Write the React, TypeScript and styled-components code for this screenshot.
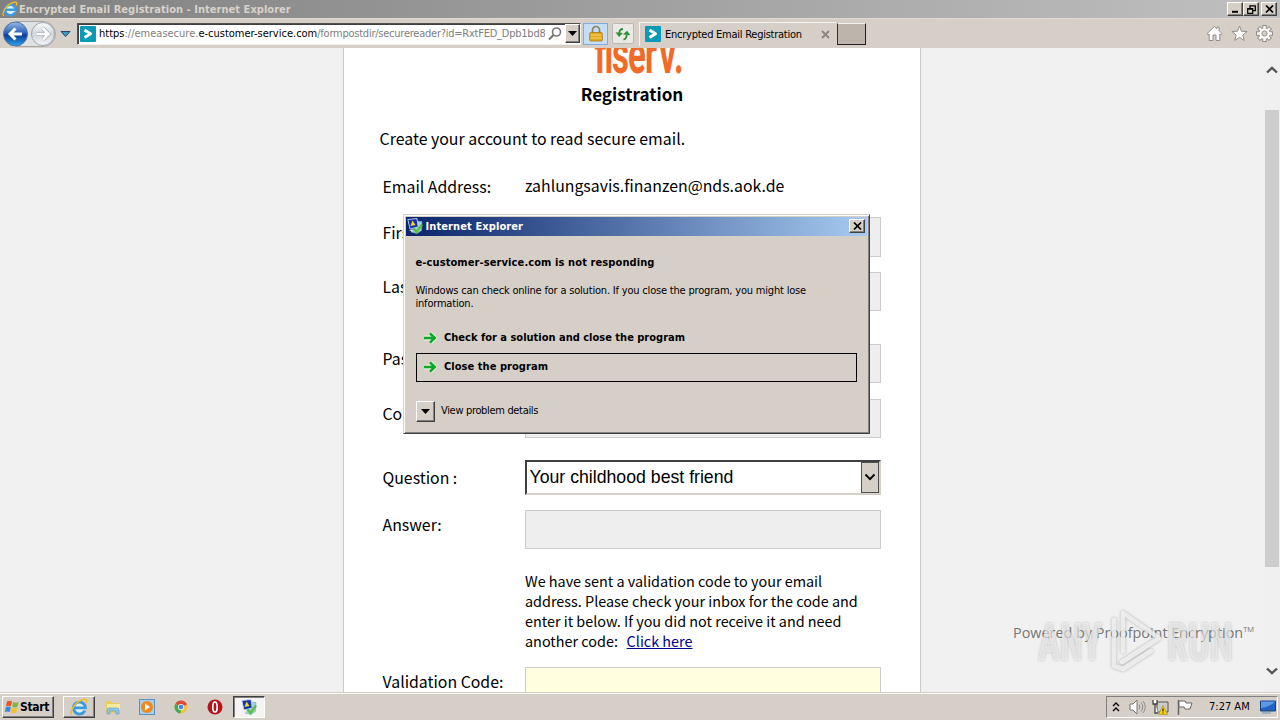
import React from 'react'
import styled, { createGlobalStyle, css } from 'styled-components'

const GlobalStyle = createGlobalStyle`
  * {
    box-sizing: border-box;
  }
  body {
    margin: 0;
    overflow: hidden;
    font-family: 'DejaVu Sans Condensed', 'DejaVu Sans', sans-serif;
    font-stretch: condensed;
    font-size: 11px;
    color: #000;
  }
  svg {
    display: block;
    flex: none;
  }
`

const raised = css`
  border: 1px solid;
  border-color: #fff #404040 #404040 #fff;
  box-shadow: inset -1px -1px 0 #808080;
  background: #d6cfc8;
`

const Desktop = styled.div`
  position: relative;
  display: flex;
  flex-direction: column;
  width: 1280px;
  height: 720px;
  overflow: hidden;
  background: #f1f1f1;
`

const Text = styled.span<{ $track?: number; $size?: number; $bold?: boolean }>`
  white-space: pre;
  font-size: ${(p) => p.$size ?? 11}px;
  font-weight: ${(p) => (p.$bold ? 700 : 400)};
  letter-spacing: ${(p) => p.$track ?? 0}px;
`

const TitleBar = styled.header`
  display: flex;
  align-items: center;
  height: 18px;
  padding: 0 3px 0 2px;
  color: #d8d2ca;
  background: linear-gradient(90deg, #808080, #c0c0c0);
`

const TitleText = styled(Text)`
  flex: 1;
  margin-left: 1px;
`

const CaptionButton = styled.button<{ $gap?: number }>`
  ${raised}
  display: flex;
  align-items: center;
  justify-content: center;
  width: 16px;
  height: 14px;
  margin: 0 0 0 ${(p) => p.$gap ?? 0}px;
  padding: 0;
`

const Toolbar = styled.nav`
  display: flex;
  align-items: center;
  height: 30px;
  padding: 0 7px 0 2px;
  border-top: 1px solid #dedad4;
  background: #d6cfc8;
`

const NavButtons = styled.div`
  display: flex;
  align-items: center;
  width: 75px;
`

const AddressBar = styled.div`
  display: flex;
  align-items: center;
  width: 504px;
  height: 22px;
  padding-left: 2px;
  border: 1px solid;
  border-color: #505050 #f4f2ee #f4f2ee #505050;
  box-shadow: inset 1px 1px 0 #404040;
  background: #fff;
`

const Url = styled.div`
  width: 446px;
  margin-left: 3px;
  overflow: hidden;
  white-space: nowrap;
  color: #808080;
  b {
    color: #000;
    font-weight: 400;
  }
`

const DropButton = styled.button<{ $w: number; $h: number }>`
  ${raised}
  display: flex;
  align-items: center;
  justify-content: center;
  width: ${(p) => p.$w}px;
  height: ${(p) => p.$h}px;
  padding: 0;
`

const LockButton = styled.div`
  display: flex;
  align-items: center;
  justify-content: center;
  width: 25px;
  height: 22px;
  margin-left: 2px;
  border: 1px solid #7fabe0;
  background: #c6ddf8;
`

const RefreshButton = styled.div`
  display: flex;
  align-items: center;
  justify-content: center;
  width: 22px;
  height: 21px;
  margin-left: 4px;
  border: 1px solid #bcb8b2;
  border-radius: 2px;
  background: #ebe9e6;
`

const Tab = styled.div`
  display: flex;
  align-items: center;
  width: 197px;
  height: 24px;
  margin-left: 5px;
  padding-left: 5px;
  border-top: 1px solid #f6f4f1;
  border-left: 1px solid #f6f4f1;
`

const TabLabel = styled(Text)`
  flex: 1;
  margin-left: 4px;
`

const NewTab = styled.div`
  width: 29px;
  height: 22px;
  margin-left: 1px;
  border: 1px solid #fff;
  border-color: #f4f2ee #202020 #202020 #303030;
  background: #bdb5ab;
`

const ToolIcons = styled.div`
  display: flex;
  gap: 8px;
  margin-left: auto;
`

const Page = styled.main`
  position: relative;
  display: flex;
  height: 644px;
  padding-left: 343px;
  overflow: hidden;
  background: #f1f1f1;
  font-family: 'Noto Sans CJK SC', 'Open Sans', sans-serif;
  font-stretch: normal;
`

const Card = styled.section`
  width: 578px;
  height: 660px;
  border: solid #ccc;
  border-width: 0 1px;
  background: #fff;
`

const Heading = styled.h1`
  margin: 7px 0 0;
  text-align: center;
  font-size: 17.1px;
  font-weight: 700;
  line-height: 24px;
`

const Intro = styled.p`
  margin: 21px 0 0 35.5px;
  font-size: 15.9px;
  line-height: 24px;
`

const FormRow = styled.div<{ $top: number; $pad?: number }>`
  display: grid;
  grid-template-columns: 142.5px 356px;
  align-items: start;
  margin: ${(p) => p.$top}px 0 0 38.5px;
  font-size: 15.85px;
  label {
    padding-top: ${(p) => p.$pad ?? 4}px;
    line-height: 24px;
    white-space: nowrap;
  }
`

const Value = styled.span`
  line-height: 24px;
`

const Input = styled.div<{ $h?: number; $yellow?: boolean }>`
  height: ${(p) => p.$h ?? 39}px;
  border: 1px solid #ccc;
  background: ${(p) => (p.$yellow ? '#ffffe0' : '#eee')};
`

const Select = styled.div`
  display: flex;
  align-items: center;
  justify-content: space-between;
  height: 35px;
  padding-left: 2.5px;
  border: 2px solid;
  border-color: #404040 #d4d0c8 #d4d0c8 #404040;
  background: #fff;
  font-family: 'Liberation Sans', Arial, sans-serif;
  font-size: 17.7px;
`

const SelectArrow = styled.span`
  display: flex;
  align-items: center;
  justify-content: center;
  width: 18px;
  height: 31px;
  border: 1px solid #505050;
  background: #d4d0c8;
`

const Note = styled.p`
  margin: 0;
  font-size: 14.4px;
  line-height: 20px;
  white-space: nowrap;
  a {
    margin-left: 5.5px;
    color: #00008b;
    text-decoration: underline;
  }
`

const Powered = styled.div`
  position: absolute;
  left: 1013px;
  top: 574px;
  color: #777;
  font-family: 'Open Sans', sans-serif;
  font-size: 14.4px;
  line-height: 22px;
  white-space: nowrap;
  sup {
    font-size: 7.5px;
    line-height: 0;
    vertical-align: 6px;
  }
`

const Watermark = styled.svg`
  position: absolute;
  left: 1030px;
  top: 600px;
  filter: drop-shadow(0 0 1.5px rgba(100, 100, 100, 0.6));
`

const ScrollBar = styled.aside`
  display: flex;
  flex-direction: column;
  align-items: center;
  width: 16px;
  margin-left: auto;
  padding: 18px 1px 17px;
  background: #f0f0f0;
`

const Thumb = styled.div`
  width: 14px;
  height: 457px;
  margin: 36px 0 auto;
  background: #cdcdcd;
`

const Dialog = styled.section`
  position: absolute;
  left: 403px;
  top: 214px;
  width: 467px;
  height: 220px;
  padding: 1px;
  border: 1px solid;
  border-color: #d6cfc8 #404040 #404040 #d6cfc8;
  box-shadow: inset 1px 1px 0 #fff, inset -1px -1px 0 #808080;
  background: #d6cfc8;
`

const DialogTitle = styled.div`
  display: flex;
  align-items: center;
  height: 19px;
  margin: 1px;
  padding: 0 2px 1px 1px;
  color: #fff;
  background: linear-gradient(90deg, #0a246a, #a6caf0);
  ${Text} {
    flex: 1;
    margin-left: 2.5px;
  }
`

const DialogBody = styled.div`
  display: flex;
  flex-direction: column;
  padding: 19px 10px 0 11px;
  line-height: 13px;
  > ${Text} {
    margin-left: -0.5px;
  }
`

const Message = styled.div`
  display: flex;
  flex-direction: column;
  margin: 15px 0 14px -0.5px;
`

const Choice = styled.div<{ $focused?: boolean }>`
  display: flex;
  align-items: center;
  width: 441px;
  height: 29px;
  padding: 0 0 1px 5px;
  border: 1px solid ${(p) => (p.$focused ? '#000' : 'transparent')};
  ${Text} {
    margin: -2px 0 0 6px;
  }
`

const Details = styled.div`
  display: flex;
  align-items: center;
  margin-top: 19px;
  ${Text} {
    margin: -2px 0 0 6px;
  }
`

const Taskbar = styled.footer`
  display: flex;
  align-items: center;
  height: 28px;
  padding: 2px;
  border-top: 1px solid #d6cfc8;
  box-shadow: inset 0 1px 0 #fff;
  background: #d6cfc8;
`

const StartButton = styled.button`
  ${raised}
  display: flex;
  align-items: center;
  width: 52px;
  height: 22px;
  padding: 0 0 0 1px;
  font-family: inherit;
  font-stretch: condensed;
`

const TaskButton = styled.div<{ $active?: boolean }>`
  ${raised}
  display: flex;
  align-items: center;
  justify-content: center;
  width: 32px;
  height: 22px;
  ${(p) =>
    p.$active &&
    css`
      border-color: #404040 #fff #fff #404040;
      box-shadow: inset 1px 1px 0 #808080;
      background: #f6f4f2;
    `}
`

const Pinned = styled.div`
  display: flex;
  gap: 18px;
  margin: 0 10px;
`

const Tray = styled.div`
  display: flex;
  align-items: center;
  width: 172px;
  height: 22px;
  margin-left: auto;
  padding-left: 5px;
  border: 1px solid;
  border-color: #808080 #fff #fff #808080;
`

const IeIcon = ({ size = 16 }: { size?: number }) => (
  <svg width={size} height={size} viewBox="0 0 16 16" fill="none">
    <circle cx="8.3" cy="8.6" r="5.4" fill="#d9f0fb" />
    <path d="M13.2 11.2a5.3 5.3 0 1 1 .5-2.5H4" stroke="#3b9bdc" strokeWidth="2.5" />
    <path d="M1.6 14.8C-.6 12 4.5 3 12 1.3c3-.6 3.3 1.1 2.1 3.3" stroke="#eebd27" strokeWidth="1.4" />
  </svg>
)

const SiteIcon = () => (
  <svg width="16" height="16" viewBox="0 0 16 16">
    <rect width="16" height="16" rx="1" fill="#0a9ab8" />
    <path d="M4.5 4 10.5 7.8 4.5 11.5" fill="none" stroke="#fff" strokeWidth="3" strokeLinejoin="round" />
  </svg>
)

const DownArrow = () => (
  <svg width="9" height="5" viewBox="0 0 9 5">
    <path d="M0 0h9L4.5 5z" fill="#000" />
  </svg>
)

const CloseGlyph = () => (
  <svg width="9" height="8" viewBox="0 0 9 8">
    <path d="m1 .5 7 7m0-7-7 7" stroke="#000" strokeWidth="1.7" />
  </svg>
)

const CrashIcon = () => (
  <svg width="16" height="16" viewBox="0 0 16 16">
    <path d="m8 3 7 .5-.5 9-4.5 3-6-1.5 2-3z" fill="#9ad3dc" stroke="#7aa3b5" strokeWidth=".6" />
    <path d="m.8 1.5 9.2-1 1.2 8.5-8.2 2z" fill="#1733a8" stroke="#c4d3ee" strokeWidth=".9" />
    <path d="m5.5 2.5 3 4.6-5 1z" fill="#f2d92c" />
    <path d="m6.5 10.5 3 3.5L15 6.5" fill="none" stroke="#5cbf3a" strokeWidth="2.3" />
    <path d="m2 12 3.5-.5V14z" fill="#e3ecf4" />
  </svg>
)

const GreenArrow = () => (
  <svg width="16" height="16" viewBox="0 0 16 16">
    <path d="M2 8h11M8 3.5 12.5 8 8 12.5" fill="none" stroke="#d9f3d6" strokeWidth="5" strokeLinejoin="round" />
    <path d="M2 8h10.500M8 3.300 12.700 8 8 12.700" fill="none" stroke="#12a52b" strokeWidth="2.600" />
  </svg>
)

const BackForward = () => (
  <svg width="55" height="28" viewBox="0 0 55 28">
    <defs>
      <linearGradient id="back" x2="0" y2="1">
        <stop offset="0" stopColor="#9bb8e6" />
        <stop offset=".45" stopColor="#2c63bd" />
        <stop offset=".55" stopColor="#0c3c99" />
        <stop offset="1" stopColor="#2ba5ee" />
      </linearGradient>
      <linearGradient id="fwd" x2="0" y2="1">
        <stop offset="0" stopColor="#fbfcfd" />
        <stop offset=".5" stopColor="#d0d5db" />
        <stop offset="1" stopColor="#f4f7fa" />
      </linearGradient>
    </defs>
    <path d="M14 1.5h27a12.5 12.5 0 0 1 0 25H14z" fill="#dfe0e0" stroke="#a7a9ad" />
    <circle cx="13.5" cy="14" r="12" fill="url(#back)" stroke="#55739e" />
    <path d="M20 14H8m5.5-5.5L8 14l5.5 5.5" fill="none" stroke="#fff" strokeWidth="3" />
    <circle cx="41" cy="14" r="11.5" fill="url(#fwd)" stroke="#9da5ae" />
    <path d="M34.5 14h12M41 8.5l5.5 5.5-5.5 5.5" fill="none" stroke="#a8adb4" strokeWidth="4" />
    <path d="M34.5 14h12M41 8.5l5.5 5.5-5.5 5.5" fill="none" stroke="#fff" strokeWidth="2.6" />
  </svg>
)

const Chevron = ({ up }: { up?: boolean }) => (
  <svg width="12" height="8" viewBox="0 0 12 8">
    <path d={up ? 'M1 6.5 6 1.8l5 4.7' : 'M1 1.5l5 4.7 5-4.7'} fill="none" stroke="#555" strokeWidth="2.4" />
  </svg>
)

const App: React.FC = () => {
  return (
    <Desktop>
      <GlobalStyle />
      <TitleBar>
        <IeIcon />
        <TitleText $bold $track={0.04}>Encrypted Email Registration - Internet Explorer</TitleText>
        <CaptionButton>
          <svg width="8" height="8" viewBox="0 0 8 8"><path d="M1 6.8h6" stroke="#000" strokeWidth="2" /></svg>
        </CaptionButton>
        <CaptionButton>
          <svg width="9" height="9" viewBox="0 0 9 9" fill="none" stroke="#000">
            <path d="M3 3V.8h5.3v4.8H6" strokeWidth="1.3" />
            <path d="M.7 3.7h5v4.6h-5zM.7 4.2h5" strokeWidth="1.2" />
          </svg>
        </CaptionButton>
        <CaptionButton $gap={2}><CloseGlyph /></CaptionButton>
      </TitleBar>

      <Toolbar>
        <NavButtons>
          <BackForward />
          <svg width="11" height="8" viewBox="0 0 11 8" style={{ marginLeft: 3 }}>
            <path d="M1 1.5h9L5.5 6.5z" fill="#3a9bc5" stroke="#22466d" />
          </svg>
        </NavButtons>
        <AddressBar>
          <SiteIcon />
          <Url>
            <Text><b>https</b>://emeasecure.<b>e-customer-service.com</b></Text>
            <Text $track={-0.24}>/formpostdir/securereader?id=RxtFED_Dpb1bd8</Text>
          </Url>
          <svg width="20" height="18" viewBox="0 0 20 18">
            <circle cx="11.5" cy="7" r="4" fill="none" stroke="#777" strokeWidth="1.6" />
            <path d="m8.5 10-4.5 4.5" stroke="#777" strokeWidth="2.2" />
          </svg>
          <DropButton $w={15} $h={19}><DownArrow /></DropButton>
        </AddressBar>
        <LockButton>
          <svg width="14" height="17" viewBox="0 0 14 17">
            <path d="M3.5 8V5a3.5 3.5 0 0 1 7 0v3" fill="none" stroke="#8d8156" strokeWidth="1.7" />
            <rect x=".7" y="7.5" width="12.6" height="8.5" rx="1" fill="#e3aa1f" stroke="#a87913" strokeWidth=".8" />
            <path d="M1.5 10h11M1.5 13h11" stroke="#f5d36b" />
          </svg>
        </LockButton>
        <RefreshButton>
          <svg width="16" height="14" viewBox="0 0 16 14">
            <path d="M8 2Q4.5 2 4.3 6" fill="none" stroke="#2f9137" strokeWidth="1.8" />
            <path d="M.5 5.2 8 6l-4 4z" fill="#2f9137" />
            <path d="M8.5 12.5q3.2-.5 3.2-5" fill="none" stroke="#2f9137" strokeWidth="1.8" />
            <path d="m8 7.500 7.500.800L12 3.800z" fill="#2f9137" />
          </svg>
        </RefreshButton>
        <Tab>
          <SiteIcon />
          <TabLabel $track={-0.25}>Encrypted Email Registration</TabLabel>
          <svg width="9" height="9" viewBox="0 0 9 9" style={{ marginRight: 6 }}>
            <path d="m1 1 7 7m0-7L1 8" stroke="#8b8680" strokeWidth="1.9" />
          </svg>
        </Tab>
        <NewTab />
        <ToolIcons>
          <svg width="17" height="17" viewBox="0 0 17 17">
            <path d="m8.5 1.5 2.4 2.2V2.2h2.2v3.5L16 8.6l-1.2 1.1-1-.8v6.6H10V10H7v5.5H3.2V8.9l-1 .8L1 8.6z" fill="#fff" stroke="#918d88" />
          </svg>
          <svg width="17" height="17" viewBox="0 0 17 17">
            <path d="m8.5 1 2 5.2 5.6.3-4.3 3.5 1.4 5.4-4.7-3-4.7 3L5.2 10 .9 6.5l5.6-.3z" fill="#fff" stroke="#918d88" />
          </svg>
          <svg width="17" height="17" viewBox="0 0 17 17">
            <g stroke="#918d88" strokeWidth="4.4">
              <path d="M8.5 0v17M0 8.5h17M2.5 2.5l12 12M14.5 2.5l-12 12" />
            </g>
            <circle cx="8.5" cy="8.5" r="6" fill="#918d88" />
            <path d="M8.5 1v15M1 8.5h15M3.2 3.2l10.6 10.6M13.8 3.2 3.2 13.8" stroke="#fff" strokeWidth="2.4" />
            <circle cx="8.5" cy="8.5" r="5.2" fill="#fff" />
            <circle cx="8.5" cy="8.5" r="2.6" fill="#d6cfc8" stroke="#918d88" />
          </svg>
        </ToolIcons>
      </Toolbar>

      <Page>
        <Card>
          <svg width="576" height="27" viewBox="0 0 576 27">
            <text
              transform="scale(.6 1)"
              x="417.5 434 446.5 473.5 501.5 525.5 550"
              y="25"
              fill="#f26a28"
              fontFamily="Roboto, sans-serif"
              fontWeight="700"
              fontSize="55"
            >
              fiserv.
            </text>
          </svg>
          <Heading>Registration</Heading>
          <Intro>Create your account to read secure email.</Intro>
          <FormRow $top={23} $pad={1}>
            <label>Email Address:</label>
            <Value>zahlungsavis.finanzen@nds.aok.de</Value>
          </FormRow>
          <FormRow $top={18}>
            <label>First Name:</label>
            <Input $h={40} />
          </FormRow>
          <FormRow $top={15} $pad={3}>
            <label>Last Name:</label>
            <Input />
          </FormRow>
          <FormRow $top={33} $pad={3}>
            <label>Password:</label>
            <Input />
          </FormRow>
          <FormRow $top={16} $pad={3}>
            <label>Confirm:</label>
            <Input />
          </FormRow>
          <FormRow $top={22} $pad={6}>
            <label>Question :</label>
            <Select>
              Your childhood best friend
              <SelectArrow>
                <svg width="12" height="9" viewBox="0 0 12 9">
                  <path d="m1.5 1.5 4.5 4.7 4.5-4.7" fill="none" stroke="#000" strokeWidth="1.9" />
                </svg>
              </SelectArrow>
            </Select>
          </FormRow>
          <FormRow $top={15} $pad={3}>
            <label>Answer:</label>
            <Input />
          </FormRow>
          <FormRow $top={22}>
            <span />
            <Note>
              We have sent a validation code to your email
              <br />
              address. Please check your inbox for the code and
              <br />
              enter it below. If you did not receive it and need
              <br />
              another code: <a>Click here</a>
            </Note>
          </FormRow>
          <FormRow $top={16} $pad={3}>
            <label>Validation Code:</label>
            <Input $yellow />
          </FormRow>
        </Card>
        <Powered>
          Powered by Proofpoint Encryption<sup>TM</sup>
        </Powered>
        <ScrollBar>
          <Chevron up />
          <Thumb />
          <Chevron />
        </ScrollBar>
      </Page>

      <Dialog>
        <DialogTitle>
          <CrashIcon />
          <Text $bold $track={0.1}>Internet Explorer</Text>
          <CaptionButton><CloseGlyph /></CaptionButton>
        </DialogTitle>
        <DialogBody>
          <Text $bold $track={0.1}>e-customer-service.com is not responding</Text>
          <Message>
            <Text $track={-0.19}>Windows can check online for a solution. If you close the program, you might lose</Text>
            <Text $track={-0.2}>information.</Text>
          </Message>
          <Choice>
            <GreenArrow />
            <Text $bold>Check for a solution and close the program</Text>
          </Choice>
          <Choice $focused>
            <GreenArrow />
            <Text $bold $track={0.05}>Close the program</Text>
          </Choice>
          <Details>
            <DropButton $w={19} $h={21}><DownArrow /></DropButton>
            <Text $track={-0.33}>View problem details</Text>
          </Details>
        </DialogBody>
      </Dialog>

      <Watermark width="210" height="80" viewBox="0 0 210 80">
        <g fill="#f6f6f6" fillOpacity=".6" fontFamily="Roboto, sans-serif" fontWeight="700" fontSize="52">
          <text x="8" y="60" textLength="64" lengthAdjust="spacingAndGlyphs">ANY</text>
          <text x="137" y="60" textLength="66" lengthAdjust="spacingAndGlyphs">RUN</text>
        </g>
        <path
          d="M93 51V13l36 25-37 24M93 69l-9-3V20M93 69l28-18"
          fill="none"
          stroke="#f8f8f8"
          strokeOpacity=".8"
          strokeWidth="4.5"
          strokeLinejoin="round"
          strokeLinecap="round"
        />
      </Watermark>

      <Taskbar>
        <StartButton>
          <svg width="16" height="16" viewBox="0 0 16 16">
            <path d="M3 2.5q2.5-1.5 5 0L7 7.3q-2.5-1.3-5 0z" fill="#e4572e" />
            <path d="M9 3q2.5 1.4 5.5 0l-1 4.8q-2.8 1.4-5.3 0z" fill="#7ab93e" />
            <path d="M1.8 8.3q2.4-1.4 5 0l-1 4.8q-2.5-1.4-5 0z" fill="#3c89d8" />
            <path d="M7.8 8.8q2.6 1.4 5.5 0l-1.1 4.8q-2.8 1.4-5.3 0z" fill="#f4bf2a" />
          </svg>
          <Text $bold $size={12} $track={-0.3}>Start</Text>
        </StartButton>
        <TaskButton style={{ marginLeft: 9 }}><IeIcon size={18} /></TaskButton>
        <Pinned>
          <svg width="16" height="16" viewBox="0 0 16 16">
            <path d="M1 2h5l1 2h7v10H1z" fill="#eacb5e" />
            <path d="M2 5h13v6H2z" fill="#f8e9a0" />
            <path d="M2 15v-4q0-2 2-2h8q2 0 2 2v4h-3v-3H5v3z" fill="#8cc7e8" stroke="#5e9cc4" strokeWidth=".6" />
          </svg>
          <svg width="16" height="16" viewBox="0 0 16 16">
            <rect x=".5" y=".5" width="15" height="15" fill="#a9cdee" stroke="#5b93c7" />
            <circle cx="8" cy="8" r="6" fill="#f08a1d" />
            <path d="m6 4.5 5 3.500-5 3.500z" fill="#fff" />
          </svg>
          <svg width="16" height="16" viewBox="0 0 16 16">
            <circle cx="8" cy="8" r="6.5" fill="#f4c53a" />
            <path d="M8 8 2.4 4.7A6.5 6.5 0 0 1 14 5.5z" fill="#dc4a3d" />
            <path d="M8 8 2.4 4.7A6.5 6.5 0 0 0 7.5 14.5z" fill="#3fa85b" />
            <circle cx="8" cy="8" r="3.1" fill="#f2f2f2" />
            <circle cx="8" cy="8" r="2.3" fill="#4285e0" />
          </svg>
          <svg width="16" height="16" viewBox="0 0 16 16">
            <circle cx="8" cy="8" r="7.5" fill="#b3151b" />
            <ellipse cx="8" cy="8" rx="2.2" ry="5" fill="#b3151b" stroke="#fff" strokeWidth="1.7" />
          </svg>
        </Pinned>
        <TaskButton $active><CrashIcon /></TaskButton>
        <Tray>
          <svg width="8" height="12" viewBox="0 0 8 12" fill="none" stroke="#000" strokeWidth="1.4">
            <path d="m1 5 3-3 3 3M1 10l3-3 3 3" />
          </svg>
          <svg width="18" height="16" viewBox="0 0 18 16" style={{ marginLeft: 8 }}>
            <path d="M2 5h3l4-4v14l-4-4H2z" fill="#fff" stroke="#777" />
            <path d="M11 5.5q2 2.5 0 5M13 3.5q3.5 4.5 0 9M15 2q4.5 6 0 12" fill="none" stroke="#8d8d8d" />
          </svg>
          <svg width="17" height="16" viewBox="0 0 17 16" style={{ marginLeft: 6 }}>
            <path d="M5 3h11v10H5z" fill="#ccc" stroke="#555" />
            <path d="M1 1v4h4V1M3 5v9h3" fill="#fff" stroke="#444" strokeWidth="1.3" />
            <path d="m11 6.5 4.5 9h-9z" fill="#f6d511" stroke="#9e8a16" strokeWidth=".6" />
            <path d="M11 9.5v3m0 1v1" stroke="#000" />
          </svg>
          <svg width="18" height="16" viewBox="0 0 18 16" style={{ marginLeft: 7 }}>
            <path d="M2.5 1v15" stroke="#666" strokeWidth="1.5" />
            <path d="M3 2h6l1 2h6l-2 6H9L8 8H3z" fill="#fff" stroke="#666" />
          </svg>
          <Text style={{ marginLeft: 15 }}>7:27 AM</Text>
          <svg width="16" height="14" viewBox="0 0 16 14" style={{ marginLeft: 'auto', marginRight: 1 }}>
            <path d="M.5 1h15v10H.5z" fill="#2463c2" stroke="#17407f" />
            <path d="M1 8q8-1 14-6v-.5H1z" fill="#5b9ae2" />
            <path d="M2 13h9" stroke="#8ea7c2" strokeWidth="1.5" />
          </svg>
        </Tray>
      </Taskbar>
    </Desktop>
  )
}

export default App
